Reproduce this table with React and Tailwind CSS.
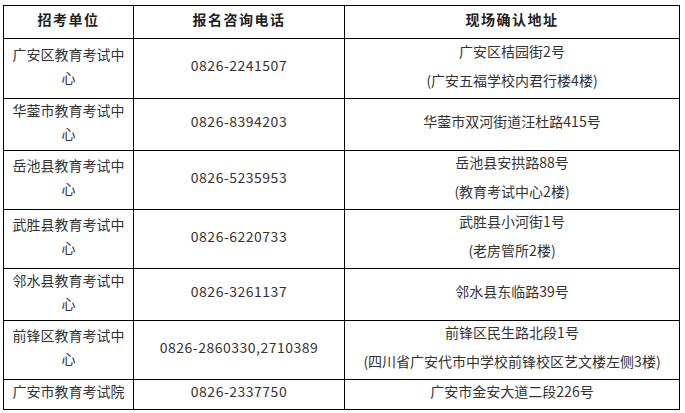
import React from "react";

const rows = [
  { unit: ["广安区教育考试中", "心"], phone: "0826-2241507", addr: ["广安区桔园街2号", "(广安五福学校内君行楼4楼)"], h: "h-[60px]" },
  { unit: ["华蓥市教育考试中", "心"], phone: "0826-8394203", addr: ["华蓥市双河街道汪杜路415号"], h: "h-[52px]" },
  { unit: ["岳池县教育考试中", "心"], phone: "0826-5235953", addr: ["岳池县安拱路88号", "(教育考试中心2楼)"], h: "h-[59px]" },
  { unit: ["武胜县教育考试中", "心"], phone: "0826-6220733", addr: ["武胜县小河街1号", "(老房管所2楼)"], h: "h-[59px]" },
  { unit: ["邻水县教育考试中", "心"], phone: "0826-3261137", addr: ["邻水县东临路39号"], h: "h-[52px]" },
  { unit: ["前锋区教育考试中", "心"], phone: "0826-2860330,2710389", addr: ["前锋区民生路北段1号", "(四川省广安代市中学校前锋校区艺文楼左侧3楼)"], h: "h-[59px]" },
  { unit: ["广安市教育考试院"], phone: "0826-2337750", addr: ["广安市金安大道二段226号"], h: "h-[30px]" },
];

const cell = "border-r border-b border-black flex flex-col items-center justify-center text-center";

export default function App() {
  return (
    <div className="w-[685px] h-[413px] bg-white pt-[5px] pl-[3px] text-[14px] text-[#333] [font-family:'Noto_Sans_CJK_SC',sans-serif]">
      <div className="w-[677px] border-l border-t border-black grid grid-cols-[130px_211px_335px]">
        <div className={`${cell} h-[33px] pb-[5px] font-bold text-[#222] tracking-[1.5px]`}>招考单位</div>
        <div className={`${cell} h-[33px] pb-[5px] font-bold text-[#222] tracking-[1.5px]`}>报名咨询电话</div>
        <div className={`${cell} h-[33px] pb-[5px] font-bold text-[#222] tracking-[1.5px]`}>现场确认地址</div>
        {rows.map((r, i) => (
          <React.Fragment key={i}>
            <div className={`${cell} ${r.h} pb-[6px] px-[4px] leading-[23px]`}>
              {r.unit.map((u, j) => (
                <div key={j}>{u}</div>
              ))}
            </div>
            <div className={`${cell} ${r.h} pb-[6px] tracking-[0.5px]`}>{r.phone}</div>
            <div className={`${cell} ${r.h} pb-[6px] leading-[29px]`}>
              {r.addr.map((a, j) => (
                <div key={j}>{a}</div>
              ))}
            </div>
          </React.Fragment>
        ))}
      </div>
    </div>
  );
}
